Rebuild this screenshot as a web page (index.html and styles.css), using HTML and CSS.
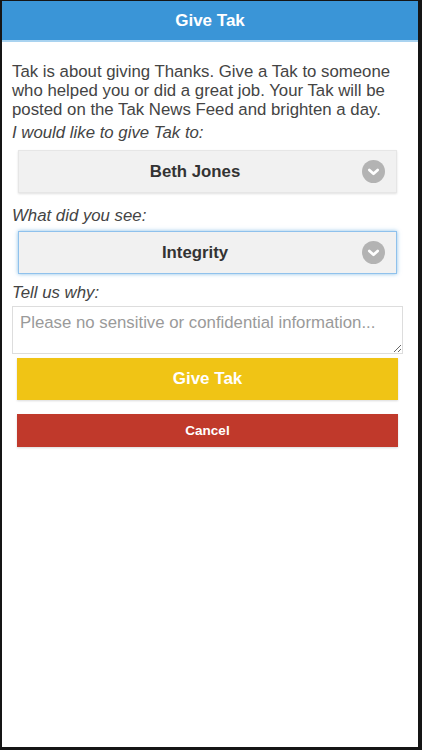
FILE: index.html
```html
<!DOCTYPE html>
<html>
<head>
<meta charset="utf-8">
<link rel="stylesheet" href="styles.css">
</head>
<body>
<div class="screen">
  <header class="topbar">Give Tak</header>
  <main class="content">
    <p class="intro">Tak is about giving Thanks. Give a Tak to someone who helped you or did a great job. Your Tak will be posted on the Tak News Feed and brighten a day.</p>
    <label class="label label-first">I would like to give Tak to:</label>
    <div class="select select-first">
      <span class="select-text">Beth Jones</span>
      <span class="chev"><svg viewBox="0 0 22 22" width="23" height="23"><circle cx="11" cy="11" r="11" fill="#b3b3b3"/><path d="M7 9.5 L11 13.2 L15 9.5" fill="none" stroke="#fff" stroke-width="2.6" stroke-linecap="round" stroke-linejoin="round"/></svg></span>
    </div>
    <label class="label">What did you see:</label>
    <div class="select focused">
      <span class="select-text">Integrity</span>
      <span class="chev"><svg viewBox="0 0 22 22" width="23" height="23"><circle cx="11" cy="11" r="11" fill="#b3b3b3"/><path d="M7 9.5 L11 13.2 L15 9.5" fill="none" stroke="#fff" stroke-width="2.6" stroke-linecap="round" stroke-linejoin="round"/></svg></span>
    </div>
    <label class="label">Tell us why:</label>
    <textarea class="why" placeholder="Please no sensitive or confidential information..."></textarea>
    <button class="btn btn-give">Give Tak</button>
    <button class="btn btn-cancel">Cancel</button>
  </main>
</div>
</body>
</html>
```
FILE: styles.css
```css
html, body {
  margin: 0;
  padding: 0;
  background: #151515;
}
body {
  width: 422px;
  height: 750px;
  overflow: hidden;
  font-family: "Liberation Sans", Arial, sans-serif;
}
.screen {
  margin: 1px 4px 3px 2px;
  height: 746px;
  background: #fff;
  display: flex;
  flex-direction: column;
}
.topbar {
  height: 39px;
  background: #3a95d7;
  border-bottom: 2px solid #a9d3f0;
  color: #fff;
  font-weight: bold;
  font-size: 17px;
  display: flex;
  align-items: center;
  justify-content: center;
}
.content {
  padding: 20px 15px 0 10px;
  display: flex;
  flex-direction: column;
}
.intro {
  margin: 0;
  font-size: 16.8px;
  line-height: 19px;
  color: #444;
}
.label {
  font-style: italic;
  font-size: 16.8px;
  line-height: 20px;
  color: #444;
}
.label-first {
  margin-top: 4px;
}
.select {
  margin: 5px 6px 9px 6px;
  height: 43px;
  padding-right: 25px;
  background: #f1f1f1;
  border: 1px solid #e6e6e6;
  box-shadow: 0 1px 2px rgba(0,0,0,0.12);
  box-sizing: border-box;
  position: relative;
  display: flex;
  align-items: center;
  justify-content: center;
}
.select-first {
  margin-top: 7px;
  margin-bottom: 13px;
}
.select.focused {
  border: 1px solid #8fc1ec;
  box-shadow: 0 0 4px rgba(58,149,215,0.6);
}
.select-text {
  font-weight: bold;
  font-size: 16.8px;
  color: #333;
}
.chev {
  position: absolute;
  right: 11px;
  top: 9px;
  width: 23px;
  height: 23px;
}
.why {
  margin-top: 3px;
  height: 48px;
  box-sizing: border-box;
  border: 1px solid #ddd;
  padding: 6px 7px;
  font-family: "Liberation Sans", Arial, sans-serif;
  font-size: 16.8px;
  color: #444;
  resize: vertical;
}
.why::placeholder {
  color: #9a9a9a;
}
.btn {
  margin: 0 5px 0 5px;
  border: none;
  color: #fff;
  font-family: "Liberation Sans", Arial, sans-serif;
  font-weight: bold;
  box-shadow: 0 1px 2px rgba(0,0,0,0.15);
}
.btn-give {
  margin-top: 4px;
  height: 42px;
  background: #f0c415;
  font-size: 17px;
}
.btn-cancel {
  margin-top: 14px;
  height: 33px;
  background: #c0392b;
  font-size: 13.5px;
}
```
